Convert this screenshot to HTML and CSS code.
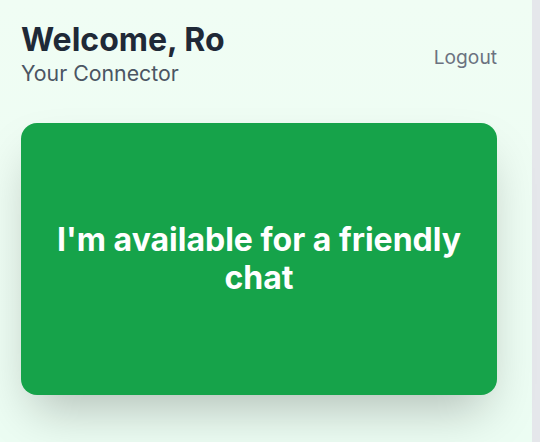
FILE: index.html
```html
<!DOCTYPE html>
<html lang="en">
<head>
<meta charset="utf-8">
<title>Connector</title>
<link rel="stylesheet" href="styles.css">
</head>
<body>
<div class="page">
  <header class="header">
    <div class="greeting">
      <h1 class="title">Welcome, Ro</h1>
      <p class="subtitle">Your Connector</p>
    </div>
    <button class="logout" type="button">Logout</button>
  </header>
  <main class="card">
    <p class="card-text">I'm available for a friendly chat</p>
  </main>
</div>
</body>
</html>
```
FILE: styles.css
```css
html {
  background: #e5e7eb;
}
body {
  margin: 0;
  font-family: Inter, "Noto Sans", sans-serif;
}
.page {
  width: 532px;
  min-height: 442px;
  box-sizing: border-box;
  padding: 22px 35px 0 21px;
  background: linear-gradient(180deg, #f0fdf4 0%, #ecfdf3 100%);
}
.header {
  display: flex;
  justify-content: space-between;
  align-items: center;
}
.greeting {
  display: flex;
  flex-direction: column;
}
.title {
  margin: 0;
  font-size: 32px;
  line-height: 36px;
  font-weight: 700;
  color: #1f2937;
}
.subtitle {
  margin: 1px 0 0;
  font-size: 21.3px;
  line-height: 28px;
  color: #4b5563;
}
.logout {
  background: none;
  border: none;
  padding: 0;
  margin-top: 5px;
  font-family: inherit;
  font-size: 19.2px;
  line-height: 28px;
  color: #6b7280;
  cursor: pointer;
}
.card {
  margin-top: 36px;
  height: 272px;
  border-radius: 16px;
  background: #16a34a;
  display: flex;
  align-items: center;
  justify-content: center;
  padding: 0 28px;
  box-shadow: 0 25px 50px -12px rgba(0, 0, 0, 0.25);
}
.card-text {
  margin: 0;
  text-align: center;
  color: #ffffff;
  font-size: 32px;
  line-height: 38px;
  font-weight: 700;
}
```
